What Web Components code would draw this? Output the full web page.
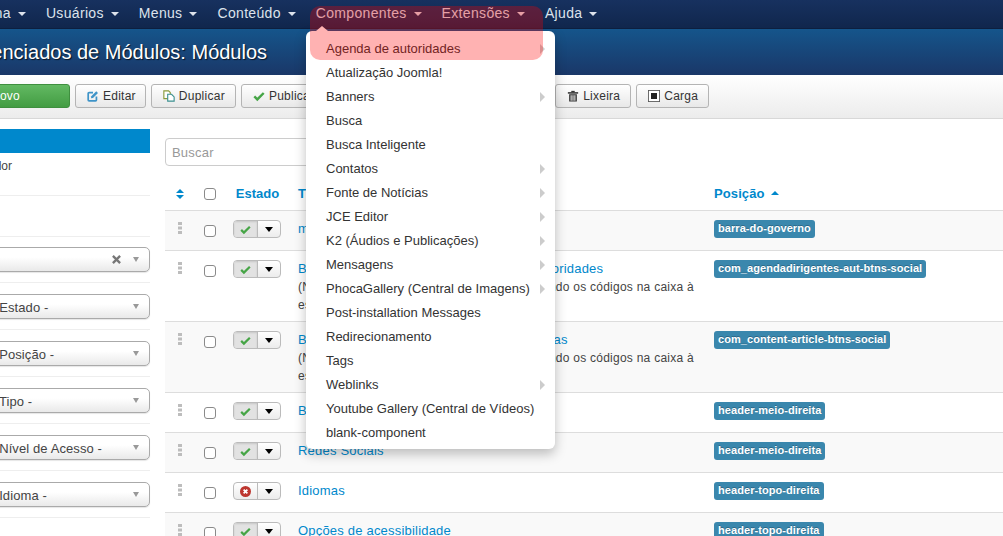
<!DOCTYPE html>
<html lang="pt">
<head>
<meta charset="utf-8">
<title>Módulos</title>
<style>
html, body { margin: 0; height: 536px; overflow: hidden; background: #fff; }
body { position: relative; font: 13px/18px "Liberation Sans", Arial, sans-serif; color: #333; }
</style>
</head>
<body>
<admin-page>
  <top-nav>
    <nav-item>Sistema</nav-item>
    <nav-item>Usuários</nav-item>
    <nav-item>Menus</nav-item>
    <nav-item>Conteúdo</nav-item>
    <nav-item open>Componentes</nav-item>
    <nav-item>Extensões</nav-item>
    <nav-item>Ajuda</nav-item>
  </top-nav>
  <sub-head>Gerenciados de Módulos: Módulos</sub-head>
  <tool-bar>
    <tool-btn kind="new">Novo</tool-btn>
    <tool-btn icon="edit" style="padding-right:9px">Editar</tool-btn>
    <tool-btn icon="copy">Duplicar</tool-btn>
    <tool-btn icon="check">Publicar</tool-btn>
    <tool-btn icon="cross">Despublicar</tool-btn>
    <tool-btn icon="check">Desbloquear</tool-btn>
    <tool-btn icon="trash">Lixeira</tool-btn>
    <tool-btn icon="box">Carga</tool-btn>
  </tool-bar>
  <main-area>
    <filter-side slot="side">
      <filter-select clear></filter-select>
      <filter-select>- Estado -</filter-select>
      <filter-select>- Posição -</filter-select>
      <filter-select>- Tipo -</filter-select>
      <filter-select>- Nível de Acesso -</filter-select>
      <filter-select>- Idioma -</filter-select>
    </filter-side>
    <module-table>
      <module-row badge="barra-do-governo">menu-barra</module-row>
      <module-row badge="com_agendadirigentes-aut-btns-social">Botões de compartilhar na Agenda das autoridades
        <span slot="desc">(Não esqueça de configurar módulo, controlando os códigos na caixa à esquerda)</span></module-row>
      <module-row badge="com_content-article-btns-social">Botões de compartilhar nos artigos e páginas
        <span slot="desc">(Não esqueça de configurar módulo, controlando os códigos na caixa à esquerda)</span></module-row>
      <module-row badge="header-meio-direita">Busca</module-row>
      <module-row badge="header-meio-direita">Redes Sociais</module-row>
      <module-row badge="header-topo-direita" off>Idiomas</module-row>
      <module-row badge="header-topo-direita">Opções de acessibilidade</module-row>
    </module-table>
  </main-area>
</admin-page>
<drop-menu>
  <menu-item sub>Agenda de autoridades</menu-item>
  <menu-item>Atualização Joomla!</menu-item>
  <menu-item sub>Banners</menu-item>
  <menu-item>Busca</menu-item>
  <menu-item>Busca Inteligente</menu-item>
  <menu-item sub>Contatos</menu-item>
  <menu-item sub>Fonte de Notícias</menu-item>
  <menu-item sub>JCE Editor</menu-item>
  <menu-item sub>K2 (Áudios e Publicações)</menu-item>
  <menu-item sub>Mensagens</menu-item>
  <menu-item sub>PhocaGallery (Central de Imagens)</menu-item>
  <menu-item>Post-installation Messages</menu-item>
  <menu-item>Redirecionamento</menu-item>
  <menu-item>Tags</menu-item>
  <menu-item sub>Weblinks</menu-item>
  <menu-item>Youtube Gallery (Central de Vídeos)</menu-item>
  <menu-item>blank-component</menu-item>
</drop-menu>
<hot-spot></hot-spot>
<script>
// the page is scrolled sideways in the reference, so the shell starts 80px off screen
const OFFSET = 80

const icons = {
  edit: `<svg viewBox="0 0 14 14"><path d="M11 7.500V11.600a1 1 0 0 1-1 1H2.400a1 1 0 0 1-1-1V4a1 1 0 0 1 1-1H7" fill="none" stroke="#3f94c8" stroke-width="2"/><path d="M5 7.200 10.800 1.400 12.800 3.400 7 9.200 4.600 9.600Z" fill="#3f94c8"/></svg>`,
  copy: `<svg viewBox="0 0 14 14" fill="#fff"><path d="M1 1H6.500L8.500 3V10H1Z" stroke="#8a9a3a" stroke-width="1.300"/><path d="M5.500 5H10L13 8V13H5.500Z" stroke="#3a8f8f" stroke-width="1.300"/></svg>`,
  check: `<svg viewBox="0 0 14 14"><path d="M1.500 7.500 5 11 12.500 3.500" fill="none" stroke="#46a546" stroke-width="2.800"/></svg>`,
  cross: `<svg viewBox="0 0 14 14"><circle cx="7" cy="7" r="7" fill="#bd362f"/><path d="M4.600 4.600 9.400 9.400M9.400 4.600 4.600 9.400" stroke="#fff" stroke-width="2.200"/></svg>`,
  trash: `<svg viewBox="0 0 14 14" fill="#333"><path d="M1 2.500H13V4.300H1Z"/><path d="M5 1H9V2.600H5Z"/><path fill-rule="evenodd" d="M2.500 5H11.500V13.500H2.500ZM4.200 6V12.500H5.400V6ZM6.400 6V12.500H7.600V6ZM8.600 6V12.500H9.800V6Z"/></svg>`,
  box: `<svg viewBox="0 0 14 14"><rect x=".5" y=".5" width="13" height="13" fill="#fff" stroke="#555"/><rect x="3.500" y="3.500" width="7" height="7" fill="#222"/></svg>`
}

function define(name, css, html, init) {
  customElements.define(name, class extends HTMLElement {
    constructor() {
      super()
      this.attachShadow({mode: 'open'})
      const tpl = document.createElement('template')
      tpl.innerHTML = `<style>${css}</style>${html}`
      this.shadowRoot.appendChild(tpl.content.cloneNode(true))
    }
    connectedCallback() {
      if (init) init(this, this.shadowRoot)
    }
  })
}

define('admin-page', `
  :host { display: block; width: ${1003 + OFFSET}px; margin-left: -${OFFSET}px; }
`, `<slot></slot>`)

define('top-nav', `
  :host { display: flex; height: 29px; padding-left: 28px; background: linear-gradient(#17315f, #10264c); box-shadow: inset 0 -1px 0 #0d1f3f; }
`, `<slot></slot>`)

define('nav-item', `
  :host { display: flex; align-items: center; height: 26px; padding: 0 10px; font-size: 14px; color: #dde3ec; letter-spacing: .33px; }
  i { margin-left: 7px; margin-top: 2px; border: 4px solid transparent; border-top-color: currentColor; border-bottom: 0; }
`, `<slot></slot><i></i>`)

define('sub-head', `
  :host { display: block; height: 46px; padding-left: 38px; background: linear-gradient(#15558b, #1a3768); color: #fff; font-size: 20px; line-height: 46px; text-shadow: 1px 1px 1px rgba(0,0,0,.7); }
`, `<slot></slot>`)

define('tool-bar', `
  :host { display: flex; gap: 5px; padding-top: 9px; padding-left: 28px; box-sizing: border-box; background: linear-gradient(#fff, #ececec); border-bottom: 1px solid #d8d8d8; height: 44px; }
`, `<slot></slot>`)

define('tool-btn', `
  :host { display: flex; align-items: center; gap: 4px; box-sizing: border-box; height: 24px; padding: 0 10px 0 11px; border: 1px solid #b4b4b4; border-radius: 3px; background: linear-gradient(#fff, #e8e8e8); color: #333; font-size: 12px; letter-spacing: .25px; white-space: nowrap; }
  :host([kind="new"]) { width: 122px; padding-left: 38px; background: linear-gradient(#62b962, #439c43); border-color: #3f8f3f; color: #fff; }
  span { display: flex; }
  svg { width: 12px; height: 12px; }
`, `<span></span><slot></slot>`, (el, root) => {
  root.querySelector('span').innerHTML = icons[el.getAttribute('icon')] || ''
})

define('main-area', `
  :host { display: flex; gap: 15px; }
  .s { flex: none; width: 230px; }
  .c { flex: 1; min-width: 0; }
`, `<div class="s"><slot name="side"></slot></div><div class="c"><slot></slot></div>`)

define('filter-side', `
  :host { display: block; padding-top: 10px; }
  .tab { height: 24px; padding-left: 18px; background: #0088cc; color: #fff; line-height: 24px; }
  .link { height: 24px; padding-left: 18px; margin-top: 1px; line-height: 24px; font-size: 12px; color: #444; }
  .gap { height: 17px; border-bottom: 1px solid #eee; }
  .gap2 { height: 40px; border-bottom: 1px solid #eee; }
`, `<div class="tab">Site</div><div class="link">Administrador</div><div class="gap"></div><div class="gap2"></div><slot></slot>`)

define('filter-select', `
  :host { display: block; padding: 10px 0 10px; border-bottom: 1px solid #eee; }
  :host(:not([clear])) { padding-top: 11px; }
  .box { display: flex; align-items: center; box-sizing: border-box; height: 25px; padding: 0 10px 0 70px; border: 1px solid #aaa; border-radius: 5px; background: linear-gradient(#fff 40%, #e9e9e9); color: #444; font-size: 13px; letter-spacing: .1px; box-shadow: 0 1px 1px rgba(0,0,0,.1); }
  .t { flex: 1; white-space: nowrap; padding-top: 3px; }
  .x { display: none; margin-right: 12px; }
  :host([clear]) .x { display: block; }
  i { border: 3px solid transparent; border-top: 5px solid #999; border-bottom: 0; }
`, `<div class="box"><span class="t"><slot></slot></span><svg class="x" width="9" height="9" viewBox="0 0 10 10"><path d="M1 1 9 9M9 1 1 9" stroke="#777" stroke-width="2.600"/></svg><i></i></div>`)

const gridCols = 'display: grid; grid-template-columns: 30px 30px 65px 416px 1fr;'

define('module-table', `
  :host { display: block; padding-top: 19px; }
  .search { box-sizing: border-box; width: 180px; height: 28px; padding-left: 6px; border: 1px solid #ccc; border-radius: 4px; color: #999; line-height: 27px; letter-spacing: .2px; }
  .head { ${gridCols} align-items: center; height: 35px; margin-top: 9px; color: #0088cc; font-weight: bold; letter-spacing: .1px; padding-top: 3px; box-sizing: border-box; }
  .head > div { display: flex; align-items: center; }
  .est { justify-content: center; letter-spacing: 0; }
  .ttl { padding-left: 8px; }
  .pos { padding-left: 8px; }
  .pos i { margin-left: 6px; margin-top: -2px; border: 4px solid transparent; border-bottom-color: #0088cc; border-top: 0; }
  .chk { box-sizing: border-box; width: 12px; height: 12px; margin-left: 9px; border: 1px solid #8a8a8a; border-radius: 3px; background: #fff; }
  ::slotted(module-row:nth-of-type(odd)) { background: #f9f9f9; }
`, `<div class="search">Buscar</div>
  <div class="head">
    <div style="justify-content:center"><svg width="8" height="10" viewBox="0 0 8 10" fill="#0088cc"><path d="M4 0 8 4H0ZM0 6H8L4 10Z"/></svg></div>
    <div><span class="chk"></span></div>
    <div class="est">Estado</div>
    <div class="ttl">Título</div>
    <div class="pos">Posição<i></i></div>
  </div>
  <slot></slot>`)

define('module-row', `
  :host { ${gridCols} box-sizing: border-box; min-height: 40px; border-top: 1px solid #ddd; font-size: 13px; }
  .h { display: flex; justify-content: center; padding-top: 11px; }
  .c { padding-top: 14px; }
  .chk { display: block; box-sizing: border-box; width: 12px; height: 12px; margin-left: 9px; border: 1px solid #8a8a8a; border-radius: 3px; background: #fff; }
  .st { padding: 9px 0 0 8px; }
  .grp { display: flex; width: 48px; height: 18px; box-sizing: border-box; border: 1px solid #bbb; border-radius: 4px; overflow: hidden; background: linear-gradient(#fff, #ececec); }
  .a { flex: 1; display: flex; align-items: center; justify-content: center; background: #e2e2e2; box-shadow: inset 0 1px 2px rgba(0,0,0,.12); border-right: 1px solid #bbb; }
  .a svg { width: 11px; height: 11px; }
  :host([off]) .a { background: none; box-shadow: none; }
  .b { flex: 1; display: flex; align-items: center; justify-content: center; }
  .b i { border: 4px solid transparent; border-top: 5px solid #000; border-bottom: 0; }
  .t { padding: 9px 8px 7px; color: #0088cc; letter-spacing: .2px; }
  .d { display: block; font-size: 12px; color: #444; letter-spacing: .25px; }
  .p { padding: 8px 0 0 8px; }
  .badge { display: inline-block; box-sizing: border-box; height: 18px; padding: 0 4px; border-radius: 3px; background: #3a87ad; color: #fff; font-size: 11px; font-weight: bold; line-height: 17px; letter-spacing: .07px; white-space: nowrap; text-shadow: 0 -1px 0 rgba(0,0,0,.25); }
`, `<div class="h"><svg width="6" height="12" viewBox="0 0 6 12" fill="#bdbdbd"><path d="M1 0H5V3H1ZM1 4.500H5V7.500H1ZM1 9H5V12H1Z"/></svg></div>
  <div class="c"><span class="chk"></span></div>
  <div class="st"><div class="grp"><div class="a"></div><div class="b"><i></i></div></div></div>
  <div class="t"><slot></slot><span class="d"><slot name="desc"></slot></span></div>
  <div class="p"><span class="badge"></span></div>`, (el, root) => {
  root.querySelector('.a').innerHTML = el.hasAttribute('off') ? icons.cross : icons.check
  root.querySelector('.badge').textContent = el.getAttribute('badge')
})

define('drop-menu', `
  :host { position: absolute; left: 306px; top: 31px; width: 249px; height: 418px; box-sizing: border-box; padding: 6px 0; background: #fff; border-radius: 6px; box-shadow: 0 5px 12px rgba(0,0,0,.25); }
  .tip { position: absolute; left: 10px; top: -5px; border: 6px solid transparent; border-bottom: 5px solid #fff; border-top: 0; }
`, `<div class="tip"></div><slot></slot>`)

define('menu-item', `
  :host { display: flex; align-items: center; height: 24px; padding: 0 10px 0 20px; color: #333; font-size: 13px; white-space: nowrap; }
  .t { flex: 1; }
  i { display: none; border: 5px solid transparent; border-left: 5px solid #ccc; border-right: 0; }
  :host([sub]) i { display: block; }
`, `<span class="t"><slot></slot></span><i></i>`)

define('hot-spot', `
  :host { position: absolute; left: 310px; top: 6px; width: 233px; height: 54px; border-radius: 10px; background: rgba(255,0,0,.3); }
`, ``)
</script>
</body>
</html>
